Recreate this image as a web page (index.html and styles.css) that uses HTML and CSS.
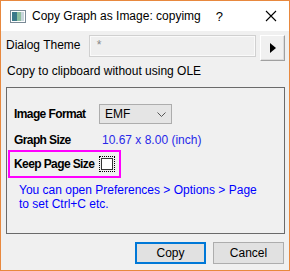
FILE: index.html
```html
<!DOCTYPE html>
<html lang="en">
  <head>
    <meta charset="UTF-8" />
    <title>Copy Graph as Image</title>
    <link rel="stylesheet" href="styles.css">
  </head>
  <body>
    <div class="window">
      <div class="titlebar">
        <svg class="app-icon" width="16" height="13" viewBox="0 0 16 13">
          <rect x="0.5" y="0.5" width="15" height="12" fill="#fff" stroke="#7a8a96"/>
          <rect x="2" y="2" width="5" height="9" fill="#3c7a8a"/>
          <rect x="7" y="2" width="4" height="9" fill="#8fc0a0"/>
          <rect x="11" y="2" width="3" height="9" fill="#c8d6dc"/>
        </svg>
        <span class="title">Copy Graph as Image: copyimg</span>
        <span class="help">?</span>
        <svg class="close" width="12" height="12" viewBox="0 0 12 12">
          <path d="M1 1 L11 11 M11 1 L1 11" stroke="#000" stroke-width="1.1"/>
        </svg>
      </div>

      <div class="content">
        <div class="theme-row">
          <span class="label">Dialog Theme</span>
          <div class="theme-box"><span>*</span></div>
          <button class="arrow-btn">
            <svg width="8" height="12" viewBox="0 0 8 12"><path d="M1 1 L7 6 L1 11 Z" fill="#000"/></svg>
          </button>
        </div>

        <p class="ole">Copy to clipboard without using OLE</p>

        <div class="group">
          <div class="field">
            <span class="bold">Image Format</span>
            <div class="select">
              <span>EMF</span>
              <svg width="9" height="5" viewBox="0 0 9 5"><path d="M0.5 0.5 L4.5 4.5 L8.5 0.5" fill="none" stroke="#555"/></svg>
            </div>
          </div>
          <div class="field size-row">
            <span class="bold">Graph Size</span>
            <span class="size">10.67 x 8.00 (inch)</span>
          </div>
          <div class="keep">
            <span class="bold">Keep Page Size</span>
            <span class="check"><span class="check-box"></span></span>
          </div>
          <p class="hint">You can open Preferences &gt; Options &gt; Page<br>to set Ctrl+C etc.</p>
        </div>

        <div class="buttons">
          <button class="btn primary">Copy</button>
          <button class="btn">Cancel</button>
        </div>
      </div>
    </div>
  </body>
</html>
```

FILE: styles.css
```css
body {
  margin: 0;
  font-family: "Liberation Sans", Arial, sans-serif;
  font-size: 12px;
  color: #000;
}

.window {
  width: 290px;
  height: 271px;
  box-sizing: border-box;
  border: 1px solid #e8883e;
  background-color: #f0f0f0;
  display: flex;
  flex-direction: column;
  white-space: nowrap;
}

.titlebar {
  height: 30px;
  background-color: #fff;
  display: flex;
  align-items: center;
  padding-left: 9px;
}

.app-icon {
  margin-right: 6px;
}

.help {
  margin-left: auto;
  font-size: 13px;
  margin-right: 42px;
}

.close {
  margin-right: 12px;
}

.content {
  padding: 4px 4px 0 5px;
}

.theme-row {
  display: flex;
  align-items: flex-start;
}

.theme-row .label {
  width: 83px;
  padding-top: 3px;
}

.theme-box {
  width: 159px;
  height: 20px;
  border: 1px solid #d0d0d0;
  outline: 1px solid #fafafa;
  outline-offset: -2px;
  background-color: #efefef;
  color: #888;
  padding-left: 7px;
  line-height: 18px;
}

.arrow-btn {
  margin-left: 4px;
  width: 25px;
  height: 26px;
  border: 1px solid #a0a0a0;
  border-top-color: #fff;
  border-left-color: #fff;
  box-shadow: inset -1px -1px 0 #dcdcdc;
  background-color: #f0f0f0;
  display: flex;
  align-items: center;
  justify-content: center;
  padding: 0;
}

.ole {
  margin: 3px 0 0 1px;
}

.group {
  margin-top: 9px;
  height: 147px;
  box-sizing: border-box;
  border: 1px solid #6a6a6a;
  padding: 13px 0 0 7px;
}

.field {
  display: flex;
  align-items: center;
  height: 26px;
}

.size-row {
  margin-bottom: -3px;
}

.bold {
  font-weight: bold;
  letter-spacing: -0.6px;
  width: 85px;
}

.select {
  width: 61px;
  height: 18px;
  border: 1px solid #adadad;
  background-color: #e5e5e5;
  display: flex;
  align-items: center;
  justify-content: space-between;
  padding: 0 5px 0 5px;
}

.size {
  color: #2828e8;
  margin-left: 3px;
}

.keep {
  display: flex;
  align-items: center;
  width: 105px;
  height: 24px;
  margin-left: -6px;
  padding-left: 4px;
  border: 2px solid #ff00ff;
}

.check {
  width: 16px;
  height: 16px;
  border: 1px dotted #000;
  box-sizing: border-box;
  display: flex;
  align-items: center;
  justify-content: center;
}

.check-box {
  width: 12px;
  height: 12px;
  border: 1px solid #333;
  background-color: #fff;
  box-sizing: border-box;
}

.hint {
  margin: 5px 0 0 5px;
  color: #0000ff;
  line-height: 14px;
}

.buttons {
  display: flex;
  justify-content: flex-end;
  gap: 7px;
  margin-top: 8px;
  padding-right: 1px;
}

.btn {
  width: 71px;
  height: 22px;
  font-family: inherit;
  font-size: 12px;
  background-color: #e1e1e1;
  border: 1px solid #adadad;
  padding: 0;
}

.btn.primary {
  border: 2px solid #0078d7;
}
```
